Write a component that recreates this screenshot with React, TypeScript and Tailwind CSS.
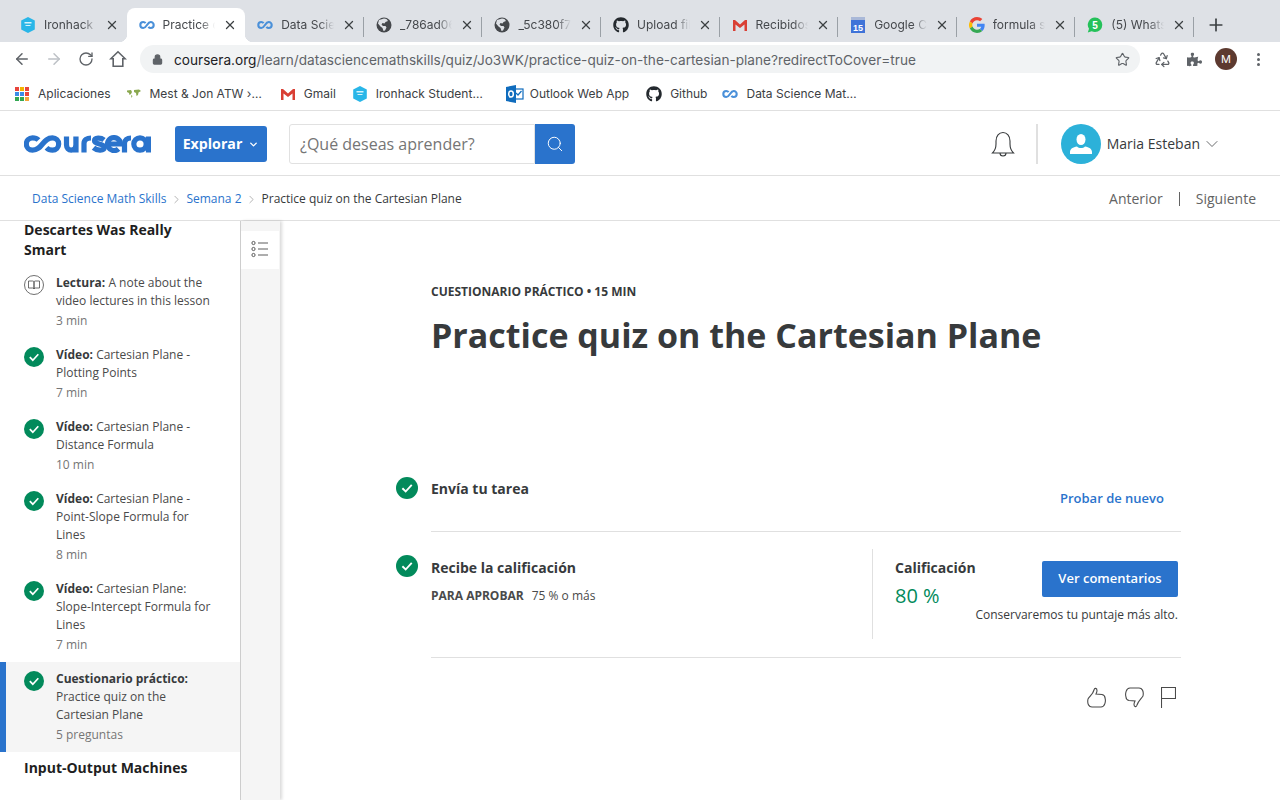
import type { ReactNode } from 'react';
import { ArrowLeft, ArrowRight, RotateCw, Star, Recycle, Plus, X, ChevronDown, Search, Lock, ChevronRight } from 'lucide-react';
import { FaGithub, FaPuzzlePiece } from 'react-icons/fa';

const CHROME_FONT = "font-['Inter','Liberation_Sans',sans-serif]";

function InfinityIcon({ size = 16 }: { size?: number }) {
  return (
    <svg width={size} height={size} viewBox="0 0 16 16" fill="none" className="shrink-0">
      <path d="M6.600 6.200C6 5.400 5.200 5 4.300 5a3 3 0 0 0 0 6c1.600 0 2.600-1.300 3.700-3s2.100-3 3.700-3a3 3 0 0 1 0 6c-.9 0-1.700-.4-2.300-1.200" stroke="#4a90d9" strokeWidth="2.100" />
    </svg>
  );
}

function IronhackIcon() {
  return (
    <svg width="16" height="16" viewBox="0 0 16 16" className="shrink-0">
      <path d="M8 0l6.800 3.500v9L8 16l-6.800-3.500v-9z" fill="#29b6e8" />
      <rect x="4.500" y="5" width="7" height="1.500" fill="#d6f3fb" />
      <rect x="5.500" y="8" width="5" height="1" fill="#d6f3fb" />
    </svg>
  );
}

function GmailIcon() {
  return (
    <svg width="16" height="16" viewBox="0 0 16 16" className="shrink-0">
      <path d="M1 3h2l5 4.500L13 3h2v11h-2.500V7.500L8 11 3.500 7.500V14H1z" fill="#d93f34" />
    </svg>
  );
}

function CalendarIcon() {
  return (
    <svg width="16" height="16" viewBox="0 0 16 16" className="shrink-0">
      <rect x="1" y="0" width="14" height="16" fill="#3f73d8" />
      <rect x="1" y="0" width="14" height="3" fill="#a9b8d8" />
      <text x="8" y="13.500" textAnchor="middle" fontSize="9" fontWeight="700" fill="#fff" fontFamily="Liberation Sans, sans-serif">15</text>
    </svg>
  );
}

function GoogleIcon() {
  return (
    <svg width="16" height="16" viewBox="0 0 48 48" className="shrink-0">
      <path fill="#EA4335" d="M24 9.500c3.500 0 6.700 1.200 9.200 3.600l6.900-6.900C35.900 2.400 30.500 0 24 0 14.600 0 6.500 5.400 2.600 13.200l8 6.200C12.500 13.700 17.800 9.500 24 9.500z" />
      <path fill="#4285F4" d="M47 24.500c0-1.600-.1-3.100-.4-4.500H24v9h12.900c-.6 3-2.200 5.500-4.700 7.200l7.700 6C44.400 37.600 47 31.600 47 24.500z" />
      <path fill="#FBBC05" d="M10.600 28.600A14.500 14.500 0 0 1 10.600 19.400l-8-6.200a24 24 0 0 0 0 21.600z" />
      <path fill="#34A853" d="M24 48c6.500 0 11.900-2.100 15.900-5.800l-7.700-6c-2.200 1.500-4.900 2.300-8.200 2.300-6.200 0-11.500-4.200-13.400-9.900l-8 6.200C6.500 42.600 14.600 48 24 48z" />
    </svg>
  );
}

function WhatsappIcon() {
  return (
    <svg width="16" height="16" viewBox="0 0 16 16" className="shrink-0">
      <path d="M8 .5a7.300 7.300 0 0 1 0 14.600c-1.200 0-2.300-.3-3.300-.8L.8 15.500l1.200-3.700A7.300 7.300 0 0 1 8 .5z" fill="#25c15a" />
      <text x="8" y="11.500" textAnchor="middle" fontSize="10" fontWeight="700" fill="#fff" fontFamily="Liberation Sans, sans-serif">5</text>
    </svg>
  );
}

function OutlookIcon() {
  return (
    <svg width="18" height="18" viewBox="0 0 18 18" className="shrink-0">
      <rect x="8" y="4" width="9" height="10" fill="#fff" stroke="#0f6cbd" strokeWidth="1.200" />
      <path d="M10 8l2 2 3.500-4" fill="none" stroke="#0f6cbd" strokeWidth="1.200" />
      <path d="M0 2l10-2v18L0 16z" fill="#0f6cbd" />
      <ellipse cx="5" cy="9" rx="2.300" ry="3" fill="none" stroke="#fff" strokeWidth="1.500" />
    </svg>
  );
}

function GlobeIcon() {
  return (
    <svg width="16" height="16" viewBox="0 0 16 16" className="shrink-0">
      <circle cx="8" cy="8" r="7.500" fill="#45484c" />
      <path d="M8 1.500l2.500.5 1.500 2-2.500 1-1 1.500-2-.5-1 1.500 1.500 1.500 2.500 0 1 1.500-1.500 3-1.500.5-1-3-2-1.500-2.500-3 1-3.500z" fill="#dee1e6" />
    </svg>
  );
}

function HomeIcon() {
  return (
    <svg width="18" height="18" viewBox="0 0 18 18" fill="none" stroke="#5f6368" strokeWidth="1.600">
      <path d="M9 1.800L1.800 8.800h2.400v7.400h9.600V8.800h2.400z" />
    </svg>
  );
}

function AppsIcon() {
  const colors = ['#e8453c', '#f4b400', '#e8453c', '#3c8ce8', '#3c8ce8', '#e8453c', '#34a853', '#34a853', '#f4a63c'];
  return (
    <span className="grid grid-cols-[4px_4px_4px] gap-[1px] shrink-0 mx-[1px]">
      {colors.map((c, i) => (
        <span key={i} className="w-1 h-1" style={{ backgroundColor: c }} />
      ))}
    </span>
  );
}

function MapIcon() {
  return (
    <svg width="16" height="16" viewBox="0 0 16 16" className="shrink-0">
      <path d="M1 4.500l4-.5 1 2-1 2-1.500 1-.5-2-2-1zM8 4l5-.5 2 1.500-2.500 1.500-.5 2.500-1.500 1-.5-3-2-1zM5 9l1.500 1-1 2z" fill="#8aa84f" />
    </svg>
  );
}

type TabDef = { title: string; icon: ReactNode; active?: boolean; sep?: boolean };

const TABS: TabDef[] = [
  { title: 'Ironhack Student', icon: <IronhackIcon /> },
  { title: 'Practice quiz', icon: <InfinityIcon />, active: true },
  { title: 'Data Science', icon: <InfinityIcon />, sep: true },
  { title: '_786ad06c2d', icon: <GlobeIcon />, sep: true },
  { title: '_5c380f7a1b', icon: <GlobeIcon />, sep: true },
  { title: 'Upload files', icon: <FaGithub size={16} className="shrink-0 text-[#24292e]" />, sep: true },
  { title: 'Recibidos (12)', icon: <GmailIcon />, sep: true },
  { title: 'Google Calendar', icon: <CalendarIcon />, sep: true },
  { title: 'formula slope', icon: <GoogleIcon />, sep: true },
  { title: '(5) WhatsApp', icon: <WhatsappIcon />, sep: true },
];

const BOOKMARKS: { title: string; icon: ReactNode; className: string }[] = [
  { title: 'Aplicaciones', icon: <AppsIcon />, className: 'gap-2' },
  { title: 'Mest & Jon ATW ›…', icon: <MapIcon />, className: 'gap-2 ml-[15px]' },
  { title: 'Gmail', icon: <GmailIcon />, className: 'gap-2 ml-[18px]' },
  { title: 'Ironhack Student…', icon: <IronhackIcon />, className: 'gap-2 ml-4' },
  { title: 'Outlook Web App', icon: <OutlookIcon />, className: 'gap-[6px] ml-[23px]' },
  { title: 'Github', icon: <FaGithub size={16} className="shrink-0 text-[#24292e]" />, className: 'gap-2 ml-[17px]' },
  { title: 'Data Science Mat…', icon: <InfinityIcon />, className: 'gap-2 ml-[15px]' },
];

function Tab({ tab }: { tab: TabDef }) {
  return (
    <div className={`relative flex h-[34px] w-[118.600px] shrink-0 items-center pl-3 pr-[8px] gap-2 ${tab.active ? 'bg-white rounded-t-lg' : ''}`}>
      {tab.active && (
        <>
          <span className="absolute bottom-0 -left-2 w-2 h-2 bg-[radial-gradient(circle_at_0_0,transparent_8px,white_8.500px)]" />
          <span className="absolute bottom-0 -right-2 w-2 h-2 bg-[radial-gradient(circle_at_100%_0,transparent_8px,white_8.500px)]" />
        </>
      )}
      {tab.icon}
      <span className="flex-1 overflow-hidden whitespace-nowrap text-xs text-[#45484c] [mask-image:linear-gradient(to_right,black_72%,transparent_100%)]">
        {tab.title}
      </span>
      <X size={14} strokeWidth={2.200} className="shrink-0 text-[#3c4043]" />
      {tab.sep && <span className="absolute right-0 top-[9px] h-[20px] w-px bg-[#9aa0a6]" />}
    </div>
  );
}

function ChromeBar() {
  return (
    <div className={`${CHROME_FONT} shrink-0`}>
      <div className="flex h-[42px] items-end bg-[#dee1e6] pl-2">
        {TABS.map((t) => (
          <Tab key={t.title} tab={t} />
        ))}
        <div className="flex h-[34px] w-[44px] items-center justify-center">
          <Plus size={20} strokeWidth={2} className="text-[#3c4043]" />
        </div>
      </div>
      <div className="flex h-[34px] items-center bg-white px-[6px]">
        {[
          <ArrowLeft key="b" size={18} strokeWidth={2} className="text-[#5f6368]" />,
          <ArrowRight key="f" size={18} strokeWidth={2} className="text-[#bdc1c6]" />,
          <RotateCw key="r" size={16} strokeWidth={2} className="text-[#5f6368]" />,
          <HomeIcon key="h" />,
        ].map((icon, i) => (
          <span key={i} className="flex w-8 items-center justify-center">{icon}</span>
        ))}
        <div className="ml-[6px] flex h-7 w-[1000px] items-center rounded-full bg-[#f1f3f4] pl-[12px] pr-[10px]">
          <Lock size={11} strokeWidth={2.500} fill="#5f6368" className="text-[#5f6368]" />
          <span className="ml-[11px] flex-1 whitespace-nowrap pt-[2px] text-[13.630px] text-[#5f6368]">
            <span className="text-[#202124]">coursera.org</span>/learn/datasciencemathskills/quiz/Jo3WK/practice-quiz-on-the-cartesian-plane?redirectToCover=true
          </span>
          <Star size={15} strokeWidth={1.800} className="text-[#5f6368]" />
        </div>
        <span className="ml-[6px] flex w-8 items-center justify-center">
          <Recycle size={17} strokeWidth={1.800} className="text-[#5f6368]" />
        </span>
        <span className="flex w-8 items-center justify-center">
          <FaPuzzlePiece size={15} className="text-[#5f6368]" />
        </span>
        <span className="flex w-8 items-center justify-center">
          <span className="flex h-[22px] w-[22px] items-center justify-center rounded-full bg-[#5d3a30] text-[11px] text-white">M</span>
        </span>
        <span className="flex w-8 flex-col items-center justify-center gap-[2px]">
          <span className="h-[3px] w-[3px] rounded-full bg-[#5f6368]" />
          <span className="h-[3px] w-[3px] rounded-full bg-[#5f6368]" />
          <span className="h-[3px] w-[3px] rounded-full bg-[#5f6368]" />
        </span>
      </div>
      <div className="flex h-[34px] items-center bg-white pl-[14px] pt-[2px]">
        {BOOKMARKS.map((b) => (
          <div key={b.title} className={`flex items-center ${b.className}`}>
            {b.icon}
            <span className="whitespace-nowrap text-xs text-[#3c4043]">{b.title}</span>
          </div>
        ))}
      </div>
    </div>
  );
}

function CourseraLogo() {
  return (
    <svg width="127" height="18" viewBox="0 0 127 18" fill="none" stroke="#2a73cc" strokeWidth="5.200">
      <path d="M14.500 5C12.800 3.200 10.800 2.800 8.500 2.800a6.200 6.200 0 0 0 0 12.400c5 0 7.500-3.100 10-6.200s5-6.200 10-6.200a6.200 6.200 0 0 1 0 12.400c-2.400 0-4.400-.8-6-2.500" />
      <path d="M42.500 1.500v8.500a4.700 5.200 0 0 0 9.400 0V1.500M52 1.500v16" />
      <path d="M60 17.500V8.500c0-3.500 3-5.500 7-5.500" />
      <path d="M80 5c-3-2.500-9.500-2.800-9.500.8 0 4.400 9.700 2 9.700 6.400 0 3.800-7 3.800-10.700.6" />
      <path d="M83 9h13.500a6.500 6.500 0 1 0-2 4.800" />
      <path d="M100.500 17.500V8.500c0-3.500 2.500-5.500 6.500-5.500" />
      <circle cx="116" cy="9" r="6.200" />
      <path d="M124.500 1.500v16" />
    </svg>
  );
}

function BellIcon() {
  return (
    <svg width="24" height="26" viewBox="0 0 24 26" fill="none" stroke="#373a3c" strokeWidth="1.100">
      <path d="M1.500 22c2-2 3.500-4 3.500-9v-3c0-5 3-8.500 7-8.500s7 3.500 7 8.500v3c0 5 1.500 7 3.500 9z" />
      <path d="M9 22a3 3 0 0 0 6 0" />
    </svg>
  );
}

function UserAvatar() {
  return (
    <span className="flex h-10 w-10 shrink-0 items-center justify-center rounded-full bg-[#2cb1d9]">
      <svg width="24" height="24" viewBox="0 0 24 24" fill="#fff">
        <ellipse cx="12" cy="7.500" rx="4.500" ry="5.500" />
        <path d="M1 22v-2c0-3 3-5 7-5.500 1 1 2.500 1.500 4 1.500s3-.5 4-1.500c4 .5 7 2.500 7 5.500v2z" />
      </svg>
    </span>
  );
}

function TopNav() {
  return (
    <header className="flex h-[66px] shrink-0 items-center border-y border-[#e0e0e0] bg-white pl-6 pt-[2px]">
      <CourseraLogo />
      <button className="ml-6 flex h-9 w-[92px] items-center justify-center gap-[6px] rounded-[3px] bg-[#2a73cc] text-[14.200px] font-bold text-white">
        Explorar
        <ChevronDown size={11} strokeWidth={3} />
      </button>
      <div className="ml-[22px] flex h-10 w-[286px]">
        <div className="flex flex-1 items-center rounded-l-[3px] border border-[#e1e1e1] pl-[10px] text-base text-[#757575]">
          ¿Qué deseas aprender?
        </div>
        <div className="flex w-10 items-center justify-center rounded-r-[3px] bg-[#2a73cc]">
          <Search size={18} strokeWidth={1.300} className="text-white" />
        </div>
      </div>
      <div className="ml-auto flex items-center pr-[58px]">
        <BellIcon />
        <span className="ml-[21px] mr-[23px] h-10 w-[2px] bg-[#e0e0e0]" />
        <UserAvatar />
        <span className="ml-[6px] text-sm text-[#373a3c]">Maria Esteban</span>
        <ChevronDown size={20} strokeWidth={0.900} className="ml-[2px] text-[#373a3c]" />
      </div>
    </header>
  );
}

function Breadcrumbs() {
  return (
    <div className="flex h-[45px] shrink-0 items-center justify-between border-b border-[#e0e0e0] bg-white pl-8 pr-6 pt-[2px] text-xs">
      <div className="flex items-center">
        <span className="text-[#2a73cc]">Data Science Math Skills</span>
        <ChevronRight size={13} strokeWidth={1} className="mx-[3.500px] text-[#757575]" />
        <span className="text-[#2a73cc]">Semana 2</span>
        <ChevronRight size={13} strokeWidth={1} className="mx-[3.500px] text-[#757575]" />
        <span className="text-[#373a3c]">Practice quiz on the Cartesian Plane</span>
      </div>
      <div className="flex items-center text-sm text-[#636363]">
        <span>Anterior</span>
        <span className="mx-4 h-[14px] w-px bg-[#636363]" />
        <span>Siguiente</span>
      </div>
    </div>
  );
}

function CheckCircle({ size = 20 }: { size?: number }) {
  return (
    <svg width={size} height={size} viewBox="0 0 20 20" className="shrink-0">
      <circle cx="10" cy="10" r="10" fill="#028a5b" />
      <path d="M5.800 10.200l3 3 5.500-6" fill="none" stroke="#fff" strokeWidth="1.700" />
    </svg>
  );
}

function BookCircle() {
  return (
    <svg width="20" height="20" viewBox="0 0 20 20" fill="none" stroke="#4a4a4a" strokeWidth="0.800" className="shrink-0">
      <circle cx="10" cy="10" r="9.500" />
      <path d="M4.500 6h4.300c.6 0 1.200.4 1.200 1v7c0-.5-.6-1-1.200-1H4.500zM15.500 6h-4.300c-.6 0-1.200.4-1.200 1v7c0-.5.6-1 1.200-1h4.300z" />
    </svg>
  );
}

const ITEMS = [
  { kind: 'Lectura:', title: 'A note about the video lectures in this lesson', meta: '3 min', book: true },
  { kind: 'Vídeo:', title: 'Cartesian Plane - Plotting Points', meta: '7 min' },
  { kind: 'Vídeo:', title: 'Cartesian Plane - Distance Formula', meta: '10 min' },
  { kind: 'Vídeo:', title: 'Cartesian Plane - Point-Slope Formula for Lines', meta: '8 min' },
  { kind: 'Vídeo:', title: 'Cartesian Plane: Slope-Intercept Formula for Lines', meta: '7 min' },
  { kind: 'Cuestionario práctico:', title: 'Practice quiz on the Cartesian Plane', meta: '5 preguntas', active: true },
];

function Sidebar() {
  return (
    <aside className="flex w-[281px] shrink-0">
      <div className="w-[241px] shrink-0 overflow-hidden border-r border-[#cfcfcf] bg-white">
        <h3 className="-mt-px whitespace-pre-line pl-6 text-sm leading-5 font-bold text-[#1f1f1f]">
          {'Descartes Was Really\nSmart'}
        </h3>
        <ul className="mt-[6px]">
          {ITEMS.map((it) => (
            <li
              key={it.title}
              className={`flex border-l-[6px] py-2 pl-[18px] pr-[20px] ${it.active ? 'border-[#2a73cc] bg-[#f5f5f5]' : 'border-transparent'}`}
            >
              <span className="w-8 shrink-0 pt-[1px]">
                {it.book ? <BookCircle /> : <CheckCircle />}
              </span>
              <div className="text-xs text-[#4a4a4a]">
                <p className="leading-[18px]">
                  <span className="font-bold text-[#373a3c]">{it.kind}</span> {it.title}
                </p>
                <p className="pt-px leading-[19px] text-[#757575]">{it.meta}</p>
              </div>
            </li>
          ))}
        </ul>
        <h3 className="mt-[6px] pl-6 text-sm leading-5 font-bold text-[#1f1f1f]">Input-Output Machines</h3>
      </div>
      <div className="relative w-[39px] shrink-0 bg-[#f5f5f5] pt-[10px] shadow-[2px_0_3px_rgba(0,0,0,0.15)]">
        <div className="flex h-[38px] w-[38px] items-center justify-center bg-white pb-[2px]">
          <svg width="18" height="18" viewBox="0 0 18 18" fill="none" stroke="#4a4a4a" strokeWidth="0.900">
            <circle cx="2.500" cy="3" r="1.600" />
            <circle cx="2.500" cy="9" r="1.600" />
            <circle cx="2.500" cy="15" r="1.600" />
            <path d="M7 3h10M7 9h10M7 15h10" />
          </svg>
        </div>
      </div>
    </aside>
  );
}

function FeedbackIcons() {
  const thumb = 'M1 12c2-3 5-5 6-9 .5-2.500 3-2 3 .5 0 1.500-.5 2.500-1 3.500l6 .5c2 .5 3 1.500 3 3.500 1 3 0 9-4 9H5c-3 0-5-3-4-8z';
  return (
    <div className="mt-[29px] flex items-center justify-end pr-[5px]">
      <svg width="20" height="21" viewBox="0 0 20 21" fill="none" stroke="#4a4a4a" strokeWidth="1.100" className="mr-[17px]">
        <path d={thumb} />
      </svg>
      <svg width="20" height="21" viewBox="0 0 20 21" fill="none" stroke="#4a4a4a" strokeWidth="1.100" className="mr-[17px] rotate-180">
        <path d={thumb} />
      </svg>
      <svg width="15" height="21" viewBox="0 0 15 21" fill="none" stroke="#4a4a4a" strokeWidth="1.100">
        <path d="M.5 21V.5h14v11H.5" />
      </svg>
    </div>
  );
}

function QuizCover() {
  return (
    <main className="min-w-0 flex-1 bg-white pl-[115px] pr-[99px]">
      <div className="pl-[35px] pt-[63px]">
        <p className="text-xs leading-4 font-bold text-[#373a3c]">CUESTIONARIO PRÁCTICO • 15 MIN</p>
        <h1 className="mt-[12px] text-[34px] leading-[46px] font-bold text-[#373a3c]">Practice quiz on the Cartesian Plane</h1>
      </div>

      <div className="mt-[119px] flex">
        <span className="mr-[13px] w-[22px] shrink-0">
          <CheckCircle size={22} />
        </span>
        <div className="flex h-[55px] flex-1 items-start justify-between border-b border-[#e0e0e0]">
          <span className="pt-[2px] text-sm leading-5 font-bold text-[#373a3c]">Envía tu tarea</span>
          <span className="pt-[11px] pr-[17px] text-[13px] leading-5 font-semibold text-[#2a73cc]">Probar de nuevo</span>
        </div>
      </div>

      <div className="mt-[23px] flex">
        <span className="mr-[13px] w-[22px] shrink-0">
          <CheckCircle size={22} />
        </span>
        <div className="flex-1 border-b border-[#e0e0e0] pb-[18px]">
          <div className="-mt-[6px] flex h-[90px]">
            <div className="w-[442px] border-r border-[#e0e0e0] pt-[9px]">
              <p className="text-sm leading-5 font-bold text-[#373a3c]">Recibe la calificación</p>
              <p className="mt-[8px] text-xs leading-5 text-[#4a4a4a]">
                <span className="font-bold">PARA APROBAR</span>
                <span className="ml-2">75 % o más</span>
              </p>
            </div>
            <div className="relative flex-1 pl-[22px] pt-[9px]">
              <p className="text-sm leading-5 font-bold text-[#373a3c]">Calificación</p>
              <p className="mt-[6px] text-xl leading-6 text-[#028a5b]">80 %</p>
              <div className="absolute right-[3px] top-[12px] flex flex-col items-end">
                <button className="h-9 w-[136px] rounded-[2px] bg-[#2a73cc] text-[13px] font-semibold text-white">Ver comentarios</button>
                <p className="mt-[10px] whitespace-nowrap text-xs leading-4 text-[#373a3c]">Conservaremos tu puntaje más alto.</p>
              </div>
            </div>
          </div>
        </div>
      </div>
      <div className="pl-[35px]">
        <FeedbackIcons />
      </div>
    </main>
  );
}

export default function App() {
  return (
    <div className="flex h-screen w-full flex-col overflow-hidden bg-white font-['Open_Sans',sans-serif]">
      <ChromeBar />
      <TopNav />
      <Breadcrumbs />
      <div className="flex min-h-0 flex-1">
        <Sidebar />
        <QuizCover />
      </div>
    </div>
  );
}
